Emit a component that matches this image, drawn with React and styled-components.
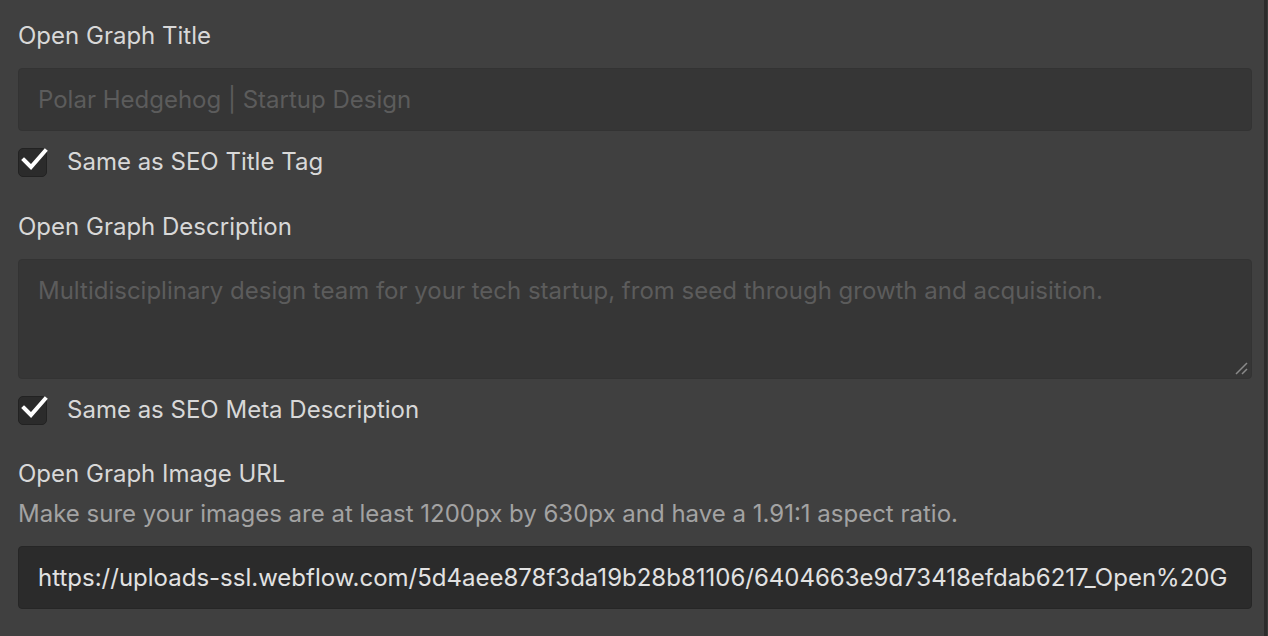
import React from 'react';
import styled, { createGlobalStyle } from 'styled-components';

const GlobalStyle = createGlobalStyle`
  html, body {
    margin: 0;
    padding: 0;
    background: #404040;
  }
  body {
    font-family: Inter, "Noto Sans", sans-serif;
    -webkit-font-smoothing: antialiased;
  }
`;

const Page = styled.div`
  display: flex;
  width: 1268px;
  height: 636px;
  overflow: hidden;
  background: #404040;
`;

const Panel = styled.div`
  flex: 1;
  min-width: 0;
  display: flex;
  flex-direction: column;
  padding: 19px 12px 0 18px;
`;

const Divider = styled.div`
  width: 3px;
  background: #2c2c2c;
  flex-shrink: 0;
`;

const Gutter = styled.div`
  width: 1px;
  background: #3a3a3a;
  flex-shrink: 0;
`;

const Label = styled.div`
  font-size: 24px;
  line-height: 34px;
  color: #d8d8d8;
  margin-bottom: ${({ $gap }) => $gap ?? 15}px;
`;

const Help = styled.div`
  font-size: 24px;
  line-height: 34px;
  color: #a3a3a3;
  margin-bottom: 15px;
`;

const Field = styled.div`
  box-sizing: border-box;
  height: ${({ $h }) => $h || 63}px;
  background: ${({ $disabled }) => ($disabled ? '#363636' : '#2b2b2b')};
  border: 1px solid ${({ $disabled }) => ($disabled ? '#333' : '#262626')};
  border-radius: 4px;
  padding: ${({ $multi }) => ($multi ? '16px 19px' : '0 19px')};
  display: flex;
  align-items: ${({ $multi }) => ($multi ? 'flex-start' : 'center')};
  font-size: 24px;
  line-height: 30px;
  color: ${({ $disabled }) => ($disabled ? '#5c5c5c' : '#e2e2e2')};
  white-space: nowrap;
  overflow: hidden;
  position: relative;
`;

const Grip = styled.svg`
  position: absolute;
  right: 3px;
  bottom: 3px;
`;

const CheckRow = styled.div`
  display: flex;
  align-items: center;
  gap: 20px;
  margin: 14px 0 ${({ $after }) => $after}px;
  font-size: 24px;
  line-height: 34px;
  color: #d8d8d8;
`;

const Box = styled.div`
  box-sizing: border-box;
  width: 29px;
  height: 29px;
  border-radius: 5px;
  background: #2b2b2b;
  border: 1px solid #222;
  position: relative;
`;

const Tick = styled.svg`
  position: absolute;
  left: 2px;
  top: -4px;
`;

const Checkbox = ({ label, after }) => (
  <CheckRow $after={after}>
    <Box>
      <Tick width="28" height="28" viewBox="0 0 28 28">
        <path d="M3 15 L10 22 L24 6" fill="none" stroke="#fff" strokeWidth="4" strokeLinecap="square" />
      </Tick>
    </Box>
    {label}
  </CheckRow>
);

const App = () => (
  <Page>
    <GlobalStyle />
    <Panel>
      <Label>Open Graph Title</Label>
      <Field $disabled>Polar Hedgehog | Startup Design</Field>
      <Checkbox label="Same as SEO Title Tag" after={31} />

      <Label>Open Graph Description</Label>
      <Field $disabled $multi $h={120}>
        Multidisciplinary design team for your tech startup, from seed through growth and acquisition.
        <Grip width="14" height="14" viewBox="0 0 14 14">
          <path d="M2 13 L13 2 M8 13 L13 8" stroke="#8a8a8a" strokeWidth="1.5" />
        </Grip>
      </Field>
      <Checkbox label="Same as SEO Meta Description" after={30} />

      <Label $gap={6}>Open Graph Image URL</Label>
      <Help>Make sure your images are at least 1200px by 630px and have a 1.91:1 aspect ratio.</Help>
      <Field>https://uploads-ssl.webflow.com/5d4aee878f3da19b28b81106/6404663e9d73418efdab6217_Open%20G</Field>
    </Panel>
    <Divider />
    <Gutter />
  </Page>
);

export default App;
